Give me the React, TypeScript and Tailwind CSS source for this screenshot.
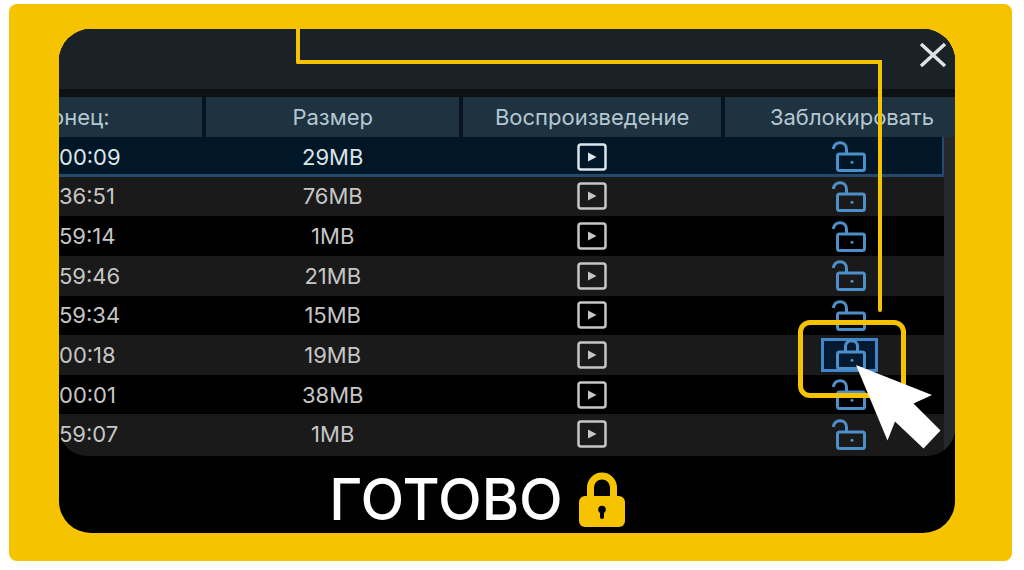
import clsx from 'clsx';

interface Recording {
  id: number;
  end: string;
  size: string;
  locked: boolean;
}

const recordings: Recording[] = [
  { id: 1, end: '00:09', size: '29MB', locked: false },
  { id: 2, end: '36:51', size: '76MB', locked: false },
  { id: 3, end: '59:14', size: '1MB', locked: false },
  { id: 4, end: '59:46', size: '21MB', locked: false },
  { id: 5, end: '59:34', size: '15MB', locked: false },
  { id: 6, end: '00:18', size: '19MB', locked: true },
  { id: 7, end: '00:01', size: '38MB', locked: false },
  { id: 8, end: '59:07', size: '1MB', locked: false },
];

function PlayIcon() {
  return (
    <svg width="30" height="28" viewBox="0 0 30 28" fill="none">
      <rect x="1.5" y="1.5" width="27" height="25" rx="2.5" stroke="currentColor" strokeWidth="2.5" />
      <path d="M11 9.5 19.5 14 11 18.5Z" fill="currentColor" />
    </svg>
  );
}

function LockIcon({ locked }: { locked: boolean }) {
  return (
    <svg width="34" height="31" viewBox="0 0 34 31" fill="none" stroke="currentColor" strokeWidth="3">
      <rect x="5.5" y="13" width="27" height="16.5" rx="2" />
      {locked ? (
        <path d="M13.5 13V7.5C13.5 4 16 1.8 19.5 1.8S25.5 4 25.5 7.5V13" />
      ) : (
        <path d="M1.3 8C2 3.8 4.6 1.7 8 1.7C12 1.7 14.5 4.5 14.5 8.5V13" />
      )}
      <circle cx="20" cy="21.3" r="1.5" fill="currentColor" stroke="none" />
    </svg>
  );
}

function Cursor() {
  return (
    <svg className="absolute right-[14px] top-[336px]" width="85" height="84" viewBox="0 0 85 84">
      <path d="M0 0 76 30 57.5 38.5 84.5 65.5 67.5 83.5 39 56.5 31.5 75.5Z" fill="#fff" />
    </svg>
  );
}

function RecordingsTable() {
  return (
    <table className="h-[357px] w-full table-fixed border-collapse text-[22px] leading-6">
      <colgroup>
        <col className="w-[16.2%]" />
        <col className="w-[28.7%]" />
        <col className="w-[29.2%]" />
        <col />
        <col className="w-[11px]" />
      </colgroup>
      <thead>
        <tr className="h-10 bg-[#1e3240] text-[#b4c8d3]">
          <th className="overflow-hidden border-r-4 border-[#06141f] p-0 text-left font-normal">
            <span className="-ml-2">онец:</span>
          </th>
          <th className="border-r-4 border-[#06141f] p-0 font-normal">Размер</th>
          <th className="border-r-4 border-[#06141f] p-0 font-normal">Воспроизведение</th>
          <th colSpan={2} className="p-0 pl-6 font-normal">Заблокировать</th>
        </tr>
      </thead>
      <tbody>
        {recordings.map((rec, i) => (
          <tr
            key={rec.id}
            className={clsx(
              i === 0 && 'bg-[#011627] text-[#dbe6ea]',
              i > 0 && 'bg-black text-[#c6c6c6]',
              i % 2 === 1 && 'bg-[#1a1a1a]'
            )}
          >
            <td className={clsx('p-0', i === 0 && 'shadow-[inset_0_-3px_0_#24496b]', i % 2 === 1 && 'bg-[#1a1a1a]')}>
              {rec.end}
            </td>
            <td
              className={clsx('p-0 text-center', i === 0 && 'shadow-[inset_0_-3px_0_#24496b]', i % 2 === 1 && 'bg-[#1a1a1a]')}
            >
              {rec.size}
            </td>
            <td className={clsx('p-0', i === 0 && 'shadow-[inset_0_-3px_0_#24496b]', i % 2 === 1 && 'bg-[#1a1a1a]')}>
              <button type="button" aria-label="Воспроизведение" className="mx-auto block">
                <PlayIcon />
              </button>
            </td>
            <td
              className={clsx('p-0 pl-8', i === 0 && 'shadow-[inset_-2px_-3px_0_#24496b]', i % 2 === 1 && 'bg-[#1a1a1a]')}
            >
              <button
                type="button"
                aria-label="Заблокировать"
                className={clsx(
                  'mx-auto flex h-[34px] w-[57px] items-center justify-center text-[#4c8fc9]',
                  rec.locked && 'border-3 border-[#3f86cc] bg-[#041a30]'
                )}
              >
                <LockIcon locked={rec.locked} />
              </button>
            </td>
            {/* scrollbar track next to the rows */}
            {i === 0 && <td rowSpan={recordings.length} className="bg-[#25282d] p-0" />}
          </tr>
        ))}
      </tbody>
    </table>
  );
}

export default function App() {
  return (
    <main className="bg-white pb-2 pl-[9px] pr-3 pt-1 font-['Inter',sans-serif]">
      <div className="rounded-lg bg-[#f5c300] pb-7 pl-[50px] pr-[57px] pt-[25px]">
        <div className="relative overflow-hidden rounded-[32px] bg-black">
          <section className="overflow-hidden rounded-b-[28px] bg-[#1a1a1a] pb-0.5">
            <div className="flex h-[60px] justify-end bg-[#1a2127] pr-2 pt-3">
              <button type="button" aria-label="Закрыть" className="h-7 w-7 text-[#dfe3e6]">
                <svg width="28" height="28" viewBox="0 0 28 28" stroke="currentColor" strokeWidth="3.5">
                  <path d="M2 3 26 25M26 3 2 25" />
                </svg>
              </button>
            </div>
            <div className="h-2 bg-[#0e1114]" />
            <RecordingsTable />
          </section>

          <div className="flex h-[77px] items-center justify-center gap-4 pr-[60px] pt-2.5">
            <h1 className="text-[57px] font-medium leading-none text-white">ГОТОВО</h1>
            <svg width="46" height="56" viewBox="0 0 46 56">
              <path d="M11.5 25V15.5a11.5 11.5 0 0 1 23 0V25" fill="none" stroke="#f5c300" strokeWidth="7" />
              <rect y="24" width="46" height="31" rx="6" fill="#f5c300" />
              <circle cx="23" cy="37.5" r="3.8" fill="#000" />
              <path d="M23 38V45" stroke="#000" strokeWidth="4" strokeLinecap="round" />
            </svg>
          </div>

          {/* callout line, frame and pointer over the locked recording */}
          <div className="absolute left-[237px] right-[73px] top-0 h-[35px] rounded-b-xs border-b-4 border-l-4 border-[#f5c300]" />
          <div className="absolute right-[73px] top-[31px] h-[252px] w-1 rounded-sm bg-[#f5c300]" />
          <div className="absolute right-[49px] top-[291px] h-[78px] w-[108px] rounded-xl border-5 border-[#f5c300]" />
          <Cursor />
        </div>
      </div>
    </main>
  );
}
